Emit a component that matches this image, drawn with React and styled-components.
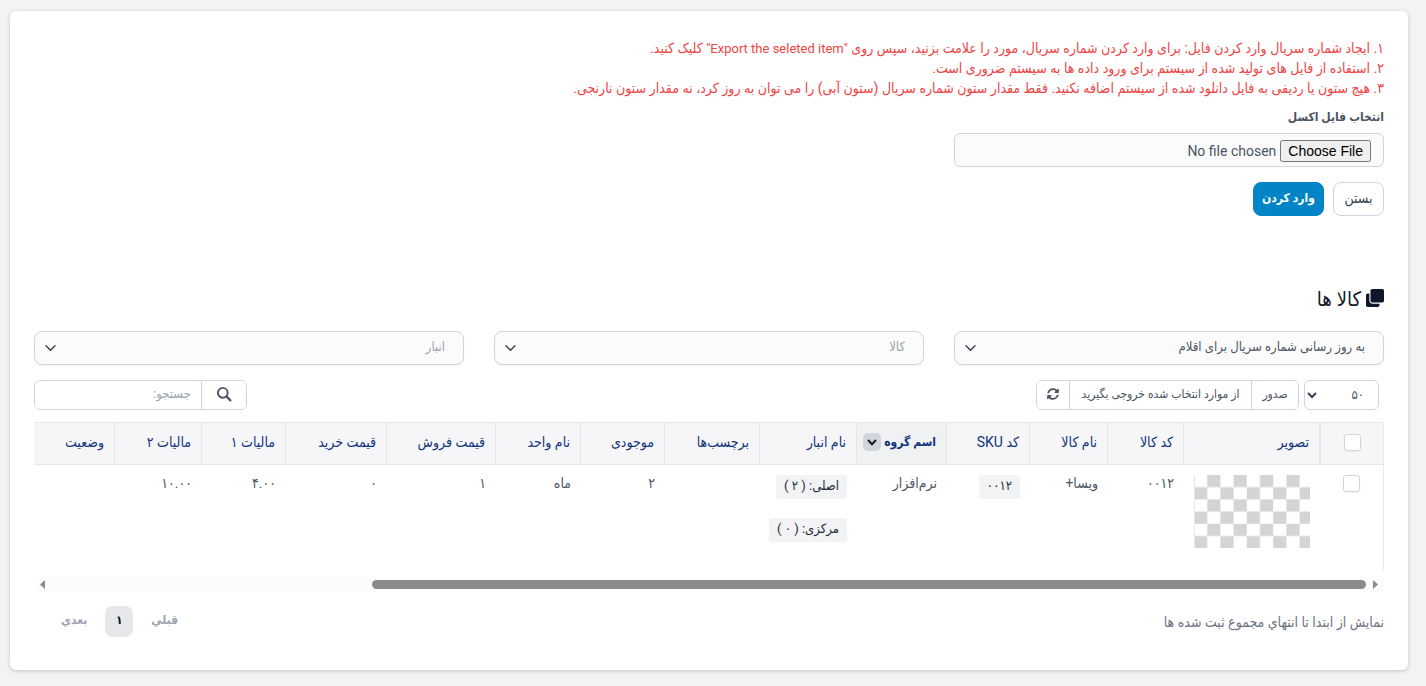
import React, { useState } from "react"
import styled, { createGlobalStyle } from "styled-components"
import { FaClone, FaSyncAlt } from "react-icons/fa"

const GlobalStyle = createGlobalStyle`
  *, *::before, *::after {
    box-sizing: border-box;
  }
  body {
    margin: 0;
    background: #f3f3f3;
    color: #4b5563;
    font-family: Roboto, "DejaVu Sans Condensed", "DejaVu Sans", sans-serif;
    font-size: 14px;
    line-height: 20px;
  }
  button, input, select {
    font: inherit;
    color: inherit;
  }
`;

const Card = styled.main`
  margin: 11px 18px 16px 10px;
  padding: 27px 24px 33px;
  background: #fff;
  border-radius: 6px;
  box-shadow: 0 1px 4px rgba(0, 0, 0, 0.2);
`;

const Notes = styled.ol`
  margin: 0;
  padding: 0;
  list-style: none;
  color: #ef4444;
`;

const Latin = styled.span`
  font-size: 13px;
  line-height: 1;
`;

const FieldGrid = styled.div`
  display: grid;
  grid-template-columns: repeat(3, 1fr);
  gap: 30px;
`;

const FileField = styled.div`
  display: flex;
  flex-direction: column;
  gap: 6px;
  padding-top: 9px;
`;

const FileLabel = styled.label`
  font-size: 12px;
  font-weight: 700;
`;

const FileInput = styled.input`
  width: 100%;
  height: 34px;
  padding: 6px 12px;
  background: #fbfbfb;
  border: 1px solid #d1d5db;
  border-radius: 6px;
  &::file-selector-button {
    font-family: "Liberation Sans", sans-serif;
    color: #000;
  }
`;

const FormActions = styled.div`
  display: flex;
  gap: 9px;
  padding: 15px 0 72px;
`;

const Button = styled.button`
  min-width: 51px;
  height: 34px;
  padding: 0 8px 2px;
  border: 1px solid ${props => props.$primary ? "#0284c7" : "#d1d5db"};
  border-radius: 8px;
  background: ${props => props.$primary ? "#0284c7" : "#fff"};
  color: ${props => props.$primary ? "#fff" : "#374151"};
  font-size: ${props => props.$primary ? 12 : 14}px;
  font-weight: ${props => props.$primary ? 700 : 400};
`;

const Heading = styled.h4`
  display: flex;
  align-items: center;
  gap: 5px;
  margin: 0 0 21px;
  color: #0f172a;
  font-size: 20px;
  font-weight: 400;
  line-height: 22px;
`;

const HeadingIcon = styled(FaClone)`
  margin-bottom: 3px;
`;

const SelectWrapper = styled.div`
  position: relative;
`;

const Select = styled.select`
  appearance: none;
  width: 100%;
  height: 34px;
  padding: 0 18px 2px 32px;
  background: #fbfbfb;
  border: 1px solid #d1d5db;
  border-radius: 8px;
  box-shadow: 0 1px 2px rgba(0, 0, 0, 0.05);
  color: ${props => props.$empty ? "#9ca3af" : "#4b5563"};
  font-size: 13px;
`;

const SelectArrow = styled.svg`
  position: absolute;
  left: 11px;
  top: 12px;
  pointer-events: none;
`;

const Toolbar = styled.div`
  display: flex;
  justify-content: space-between;
  padding: 15px 0 12px;
`;

const ToolbarStart = styled.div`
  display: flex;
  gap: 5px;
  padding-right: 5px;
`;

const LengthWrapper = styled.div`
  position: relative;
`;

const LengthSelect = styled.select`
  appearance: none;
  width: 75px;
  height: 30px;
  padding: 0 14px;
  background: #fff;
  border: 1px solid #d1d5db;
  border-radius: 6px;
  font-size: 13px;
`;

const LengthArrow = styled.svg`
  position: absolute;
  left: 3px;
  top: 12px;
  pointer-events: none;
`;

const Group = styled.div`
  display: flex;
  height: 30px;
  overflow: hidden;
  border: 1px solid #d1d5db;
  border-radius: 6px;
  background: #fff;
`;

const GroupButton = styled.button`
  display: flex;
  align-items: center;
  justify-content: center;
  min-width: ${props => props.$width}px;
  padding: 0 8px 2px;
  border: 0;
  background: #fff;
  font-size: 12px;
  & + & {
    border-right: 1px solid #d1d5db;
  }
`;

const SearchInput = styled.input`
  width: 167px;
  padding: 0 10px 2px;
  border: 0;
  border-right: 1px solid #d1d5db;
  background: #fff;
  font-size: 13px;
  &::placeholder {
    color: #9ca3af;
    opacity: 1;
  }
`;

const TableScroll = styled.div`
  overflow: hidden;
`;

const Table = styled.table`
  width: 100%;
  table-layout: fixed;
  border-spacing: 0;
  border-right: 1px solid #e9eaee;
`;

const Th = styled.th`
  height: 43px;
  padding: ${props => props.$center ? "0 9px" : "0 10px 3px"};
  border: solid #e5e7eb;
  border-width: 1px 0 1px 1px;
  background: ${props => props.$sorted ? "#eff1f3" : "#f6f6f9"};
  color: #0f347b;
  font-size: ${props => props.$sorted ? 12 : 14}px;
  font-weight: ${props => props.$sorted ? 700 : 400};
  text-align: ${props => props.$center ? "center" : "right"};
  white-space: nowrap;
  &:first-child {
    border-left-width: 2px;
  }
  &:last-child {
    border-left-width: 0;
  }
`;

const SortLabel = styled.span`
  display: flex;
  align-items: center;
  gap: 3px;
`;

const SortButton = styled.button`
  display: flex;
  flex-shrink: 0;
  align-items: center;
  justify-content: center;
  width: 18px;
  height: 18px;
  padding: 0;
  border: 0;
  border-radius: 5px;
  background: #d1d5db;
  color: #111827;
`;

const Td = styled.td`
  height: 106px;
  padding: ${props => props.$block ? 10 : 8}px 9px 0;
  vertical-align: top;
  text-align: ${props => props.$center ? "center" : "right"};
  white-space: nowrap;
`;

const Checkbox = styled.input`
  appearance: none;
  width: 17px;
  height: 17px;
  margin: 0;
  background: #fff;
  border: 1px solid #d1d5db;
  border-radius: 3px;
  box-shadow: 0 1px 2px rgba(0, 0, 0, 0.05);
  vertical-align: top;
  &:checked {
    background: #0284c7;
  }
`;

const Thumb = styled.svg`
  display: block;
`;

const Badge = styled.span`
  display: inline-block;
  padding: 1px 8px 3px;
  border-radius: 3px;
  background: #f1f3f5;
  color: #1f2937;
  font-size: 13px;
`;

const Badges = styled.div`
  display: flex;
  flex-direction: column;
  align-items: flex-start;
  gap: 19px;
`;

const Scrollbar = styled.div`
  display: flex;
  align-items: center;
  gap: 6px;
  height: 15px;
  margin-top: 6px;
  padding: 0 5px;
  background: #fcfcfc;
`;

const ScrollTrack = styled.div`
  flex: 1;
`;

const ScrollThumb = styled.div`
  width: calc(100% - 320px);
  height: 9px;
  border-radius: 5px;
  background: #8b8b8b;
`;

const Footer = styled.div`
  display: flex;
  justify-content: space-between;
  align-items: center;
  padding: 14px 0 0 17px;
  color: #6b7280;
`;

const Pagination = styled.nav`
  display: flex;
  gap: 8px;
  font-size: 12px;
`;

const PageLink = styled.a`
  min-width: 28px;
  padding: 4px 10px 7px;
  border-radius: 8px;
  background: ${props => props.$current ? "#e5e7eb" : "transparent"};
  color: ${props => props.$current ? "#111827" : "#9ca3af"};
  font-weight: 700;
  text-align: center;
  text-decoration: none;
`;

const columns = [
  { title: "تصویر", width: 136 },
  { title: "کد کالا", width: 76 },
  { title: "نام کالا", width: 78 },
  { title: "کد SKU", width: 83 },
  { title: "اسم گروه", width: 90, sorted: true },
  { title: "نام انبار", width: 97 },
  { title: "برچسب‌ها", width: 95 },
  { title: "موجودی", width: 84 },
  { title: "نام واحد", width: 85 },
  { title: "قیمت فروش", width: 109 },
  { title: "قیمت خرید", width: 101 },
  { title: "مالیات ۱", width: 84 },
  { title: "مالیات ۲", width: 87 },
  { title: "وضعیت" }
]

const cells = [
  <Checkerboard />,
  "۰۰۱۲",
  "ویسا+",
  <Badge>۰۰۱۲</Badge>,
  "نرم‌افزار",
  <Badges>
    <Badge>اصلی: ( ۲ )</Badge>
    <Badge>مرکزی: ( ۰ )</Badge>
  </Badges>,
  "",
  "۲",
  "ماه",
  "۱",
  "۰",
  "۴.۰۰",
  "۱۰.۰۰",
  ""
]

function Checkerboard() {
  return (
    <Thumb width="116" height="73" viewBox="0 0 116 73" role="img" aria-label="ویسا+">
      <defs>
        <pattern id="squares" width="26.4" height="24.4" patternUnits="userSpaceOnUse">
          <path d="M13.2 0h13.2v12.2H13.2zM0 12.2h13.2v12.2H0z" fill="#d3d4d6" />
        </pattern>
      </defs>
      <rect width="116" height="73" fill="url(#squares)" />
      <path d="M0.5 0v73" stroke="#e5e7eb" strokeWidth="1" />
    </Thumb>
  )
}

function SearchIcon() {
  return (
    <svg width="16" height="16" viewBox="0 0 16 16" aria-hidden="true">
      <circle cx="6.8" cy="6.8" r="4.9" fill="none" stroke="currentColor" strokeWidth="1.9" />
      <path d="M10.4 10.4l4 4" stroke="currentColor" strokeWidth="2.2" strokeLinecap="round" />
    </svg>
  )
}

function SelectField({ label, options }) {
  const [value, setValue] = useState("")
  return (
    <SelectWrapper>
      <Select aria-label={label} value={value} $empty={!options} onChange={e => setValue(e.target.value)}>
        <option value="">{options ? options[0] : label}</option>
      </Select>
      <SelectArrow width="11" height="10" viewBox="0 0 11 10" aria-hidden="true">
        <path d="M1 2.8l4.5 4.4L10 2.8" fill="none" stroke="#374151" strokeWidth="1.4" strokeLinecap="round" />
      </SelectArrow>
    </SelectWrapper>
  )
}

export default () => (
  <Card dir="rtl" lang="fa">
    <GlobalStyle />
    <Notes>
      <li>۱. ایجاد شماره سریال وارد کردن فایل: برای وارد کردن شماره سریال، مورد را علامت بزنید، سپس روی <Latin>"Export the seleted item"</Latin> کلیک کنید.</li>
      <li>۲. استفاده از فایل های تولید شده از سیستم برای ورود داده ها به سیستم ضروری است.</li>
      <li>۳. هیچ ستون یا ردیفی به فایل دانلود شده از سیستم اضافه نکنید. فقط مقدار ستون شماره سریال (ستون آبی) را می توان به روز کرد، نه مقدار ستون نارنجی.</li>
    </Notes>
    <FieldGrid>
      <FileField>
        <FileLabel htmlFor="excel">انتخاب فایل اکسل</FileLabel>
        <FileInput id="excel" type="file" />
      </FileField>
    </FieldGrid>
    <FormActions>
      <Button type="button">بستن</Button>
      <Button type="button" $primary>وارد کردن</Button>
    </FormActions>
    <Heading>
      <HeadingIcon size={18} />
      کالا ها
    </Heading>
    <FieldGrid>
      <SelectField label="عملیات" options={["به روز رسانی شماره سریال برای اقلام"]} />
      <SelectField label="کالا" />
      <SelectField label="انبار" />
    </FieldGrid>
    <Toolbar>
      <ToolbarStart>
        <LengthWrapper>
          <LengthSelect aria-label="تعداد در صفحه" defaultValue="50">
            <option value="50">۵۰</option>
          </LengthSelect>
          <LengthArrow width="10" height="7" viewBox="0 0 10 7" aria-hidden="true">
            <path d="M1 1l4 4L9 1" fill="none" stroke="#374151" strokeWidth="2" />
          </LengthArrow>
        </LengthWrapper>
        <Group>
          <GroupButton type="button" $width={46}>صدور</GroupButton>
          <GroupButton type="button" $width={182}>از موارد انتخاب شده خروجی بگیرید</GroupButton>
          <GroupButton type="button" $width={33} aria-label="بارگذاری مجدد"><FaSyncAlt size={12} /></GroupButton>
        </Group>
      </ToolbarStart>
      <Group>
        <GroupButton type="button" aria-label="جستجو" $width={44}><SearchIcon /></GroupButton>
        <SearchInput type="search" placeholder="جستجو:" aria-label="جستجو" />
      </Group>
    </Toolbar>
    <TableScroll>
      <Table>
        <colgroup>
          <col width="64" />
          {columns.map(column => <col key={column.title} width={column.width} />)}
        </colgroup>
        <thead>
          <tr>
            <Th $center><Checkbox type="checkbox" aria-label="انتخاب همه" /></Th>
            {columns.map(column => (
              <Th key={column.title} $sorted={column.sorted}>
                {column.sorted ? (
                  <SortLabel>
                    {column.title}
                    <SortButton type="button" aria-label="مرتب سازی">
                      <svg width="10" height="7" viewBox="0 0 10 7" aria-hidden="true">
                        <path d="M1 1l4 4.2L9 1" fill="none" stroke="currentColor" strokeWidth="2" />
                      </svg>
                    </SortButton>
                  </SortLabel>
                ) : column.title}
              </Th>
            ))}
          </tr>
        </thead>
        <tbody>
          <tr>
            <Td $center $block><Checkbox type="checkbox" aria-label="انتخاب ویسا+" /></Td>
            {cells.map((cell, index) => <Td key={index} $block={typeof cell !== "string"}>{cell}</Td>)}
          </tr>
        </tbody>
      </Table>
    </TableScroll>
    <Scrollbar aria-hidden="true">
      <svg width="7" height="9" viewBox="0 0 7 9"><path d="M1 0l5 4.5L1 9z" fill="#8b8b8b" /></svg>
      <ScrollTrack><ScrollThumb /></ScrollTrack>
      <svg width="7" height="9" viewBox="0 0 7 9"><path d="M6 0L1 4.5 6 9z" fill="#8b8b8b" /></svg>
    </Scrollbar>
    <Footer>
      <span>نمايش از ابتدا تا انتهاي مجموع ثبت شده ها</span>
      <Pagination>
        <PageLink href="#prev">قبلي</PageLink>
        <PageLink href="#1" $current>۱</PageLink>
        <PageLink href="#next">بعدي</PageLink>
      </Pagination>
    </Footer>
  </Card>
)
